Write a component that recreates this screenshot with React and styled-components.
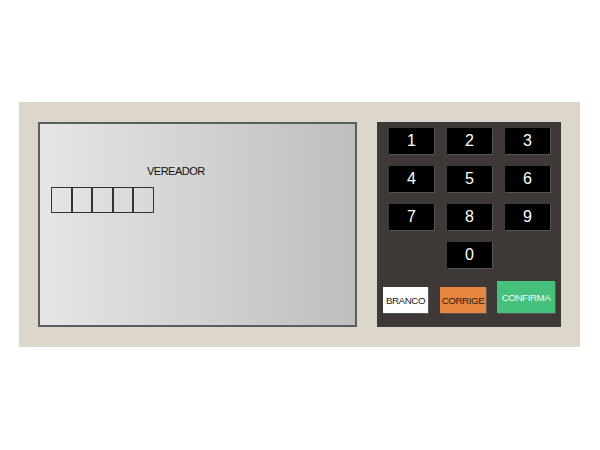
import React from "react";
import styled, { createGlobalStyle } from "styled-components";

const Global = createGlobalStyle`
  html, body { margin: 0; padding: 0; background: #ffffff; }
  body { font-family: "Liberation Sans", Arial, sans-serif; }
`;

const Page = styled.div`
  padding: 102px 0 0 19px;
`;

const Urna = styled.div`
  box-sizing: border-box;
  width: 561px;
  height: 245px;
  padding: 20px 19px;
  background: #ddd6cb;
  display: flex;
  gap: 20px;
`;

const Screen = styled.div`
  box-sizing: border-box;
  width: 319px;
  height: 205px;
  border: 2px solid #5c5c5c;
  background: linear-gradient(to right, #e6e6e6, #bebebe);
  display: flex;
  flex-direction: column;
  padding: 40px 0 0 11px;
`;

const Role = styled.div`
  font-size: 11px;
  letter-spacing: -0.5px;
  color: #111;
  padding-left: 96px;
  line-height: 14px;
`;

const Digits = styled.div`
  display: flex;
  margin-top: 9px;
`;

const Digit = styled.div`
  box-sizing: border-box;
  width: 20.6px;
  height: 26px;
  border: 1px solid #333;
`;

const Keypad = styled.div`
  box-sizing: border-box;
  width: 184px;
  height: 205px;
  background: #3e3937;
  padding: 6px 12px 0 12px;
  display: flex;
  flex-direction: column;
`;

const Keys = styled.div`
  display: grid;
  grid-template-columns: repeat(3, 45px);
  column-gap: 13px;
  row-gap: 12px;
`;

const Key = styled.div`
  box-sizing: border-box;
  width: 45px;
  height: 26px;
  background: #000;
  color: #fff;
  font-size: 16px;
  display: flex;
  align-items: center;
  justify-content: center;
  box-shadow: 1px 1px 0 #5a5555;
  grid-column: ${(p) => p.$col || "auto"};
`;

const Actions = styled.div`
  display: flex;
  align-items: flex-end;
  margin: 13px 0 0 -6px;
`;

const Action = styled.div`
  box-sizing: border-box;
  flex: 0 0 auto;
  width: ${(p) => p.$w}px;
  height: ${(p) => p.$h}px;
  margin-right: ${(p) => p.$mr || 0}px;
  background: ${(p) => p.$bg};
  color: ${(p) => p.$fg};
  font-size: 9.8px;
  letter-spacing: -0.45px;
  display: flex;
  align-items: center;
  justify-content: center;
  box-shadow: 1px 1px 0 #5a5555;
`;

export default function App() {
  const nums = ["1", "2", "3", "4", "5", "6", "7", "8", "9"];
  return (
    <Page>
      <Global />
      <Urna>
        <Screen>
          <Role>VEREADOR</Role>
          <Digits>
            {[0, 1, 2, 3, 4].map((i) => (
              <Digit key={i} />
            ))}
          </Digits>
        </Screen>
        <Keypad>
          <Keys>
            {nums.map((n) => (
              <Key key={n}>{n}</Key>
            ))}
            <Key $col={2}>0</Key>
          </Keys>
          <Actions>
            <Action $w={45} $h={26} $mr={12} $bg="#ffffff" $fg="#222">BRANCO</Action>
            <Action $w={46} $h={26} $mr={11} $bg="#e8853e" $fg="#2a2118">CORRIGE</Action>
            <Action $w={58} $h={32} $bg="#45c17b" $fg="#f2fbf5">CONFIRMA</Action>
          </Actions>
        </Keypad>
      </Urna>
    </Page>
  );
}
